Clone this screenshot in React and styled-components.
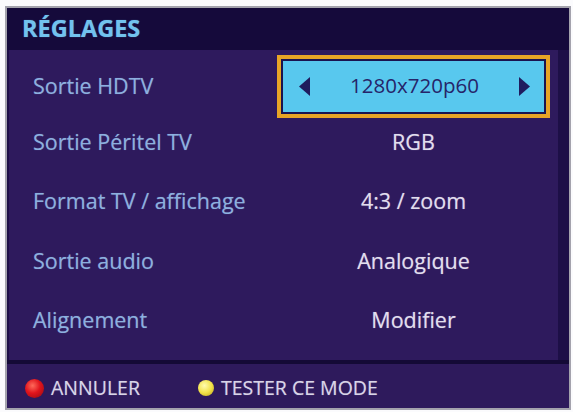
import React from "react";
import styled, { createGlobalStyle } from "styled-components";

const Global = createGlobalStyle`
  html, body { margin: 0; padding: 0; background: #ffffff; }
  body { font-family: "Open Sans", "Liberation Sans", Arial, sans-serif; font-stretch: 92%; }
`;

const Page = styled.div`
  width: 573px;
  height: 412px;
  padding: 6px 0 0 5px;
  box-sizing: border-box;
  background: #fbfbfd;
`;

const Frame = styled.div`
  width: 566px;
  height: 404px;
  box-sizing: border-box;
  border: 2px solid #a4a3ad;
  background: #1d0f47;
  display: flex;
  flex-direction: column;
`;

const Header = styled.div`
  height: 42px;
  flex: none;
  display: flex;
  align-items: center;
  padding-left: 15px;
  background: #150a3b;
`;

const Title = styled.h1`
  margin: 0;
  font-family: "Open Sans", "Liberation Sans", sans-serif;
  font-stretch: 90%;
  font-weight: 700;
  font-size: 23.5px;
  line-height: 1;
  color: #72c2ee;
  text-shadow: 0 0 1px rgba(114, 194, 238, 0.6);
`;

const List = styled.div`
  flex: none;
  height: 310px;
  box-sizing: border-box;
  padding: 2px 0 3px 0;
  margin: 0 11px 0 2px;
  background: #2e1a5d;
  display: flex;
  flex-direction: column;
`;

const Row = styled.div`
  height: 59.5px;
  flex: none;
  display: grid;
  grid-template-columns: 1fr 273px;
  align-items: center;
  padding: 0 8px 0 24px;
`;

const Label = styled.span`
  font-size: 21.5px;
  font-weight: 500;
  color: #8db0df;
  white-space: nowrap;
  text-shadow: 0 0 1px rgba(141, 176, 223, 0.5);
`;

const Value = styled.span`
  text-align: center;
  font-size: 21.5px;
  font-weight: 500;
  color: #e2deee;
  white-space: nowrap;
  text-shadow: 0 0 1px rgba(226, 222, 238, 0.5);
`;

const Selector = styled.div`
  height: 63px;
  margin-top: 3px;
  box-sizing: border-box;
  border: 4px solid #e8a526;
  background: #1a1450;
  padding: 2px;
  display: flex;
`;

const SelectorInner = styled.div`
  flex: 1;
  background: #58c8ee;
  display: flex;
  align-items: center;
  justify-content: space-between;
  padding: 0 13px 0 15px;
`;

const SelectorText = styled.span`
  font-size: 20.5px;
  font-weight: 500;
  color: #262469;
  white-space: nowrap;
  margin-top: -3px;
`;

const Arrow = styled.svg`
  width: 13px;
  height: 21px;
  flex: none;
`;

const Divider = styled.div`
  height: 4px;
  flex: none;
  background: #140a36;
`;

const Footer = styled.div`
  flex: 1;
  display: flex;
  align-items: center;
  padding: 3px 0 0 18px;
  background: #2e1a5c;
`;

const Hint = styled.div`
  display: flex;
  align-items: center;
  gap: 7px;
  margin-right: ${(p) => p.$gap || 0}px;
`;

const Dot = styled.span`
  width: ${(p) => p.$size}px;
  height: ${(p) => p.$size}px;
  border-radius: 50%;
  flex: none;
  margin-top: 1px;
  background: ${(p) => p.$bg};
`;

const HintText = styled.span`
  font-size: 19.5px;
  font-weight: 500;
  color: #d9d5e8;
  text-shadow: 0 0 1px rgba(217, 213, 232, 0.5);
`;

const rows = [
  { label: "Sortie HDTV", value: "1280x720p60", selected: true },
  { label: "Sortie Péritel TV", value: "RGB" },
  { label: "Format TV / affichage", value: "4:3 / zoom" },
  { label: "Sortie audio", value: "Analogique" },
  { label: "Alignement", value: "Modifier" },
];

export default function App() {
  return (
    <>
      <Global />
      <Page>
        <Frame>
          <Header>
            <Title>RÉGLAGES</Title>
          </Header>
          <List>
            {rows.map((r) => (
              <Row key={r.label}>
                <Label>{r.label}</Label>
                {r.selected ? (
                  <Selector>
                    <SelectorInner>
                      <Arrow viewBox="0 0 13 21">
                        <polygon points="12,1 1,10.5 12,20" fill="#1f1c5e" />
                      </Arrow>
                      <SelectorText>{r.value}</SelectorText>
                      <Arrow viewBox="0 0 13 21">
                        <polygon points="1,1 12,10.5 1,20" fill="#1f1c5e" />
                      </Arrow>
                    </SelectorInner>
                  </Selector>
                ) : (
                  <Value>{r.value}</Value>
                )}
              </Row>
            ))}
          </List>
          <Divider />
          <Footer>
            <Hint $gap={58}>
              <Dot
                $size={19}
                $bg="radial-gradient(circle at 40% 35%, #ff6a5a 0%, #e0141c 45%, #8e0a10 100%)"
              />
              <HintText>ANNULER</HintText>
            </Hint>
            <Hint>
              <Dot
                $size={16}
                $bg="radial-gradient(circle at 40% 35%, #fffbb0 0%, #f2e24a 50%, #b8a214 100%)"
              />
              <HintText>TESTER CE MODE</HintText>
            </Hint>
          </Footer>
        </Frame>
      </Page>
    </>
  );
}
